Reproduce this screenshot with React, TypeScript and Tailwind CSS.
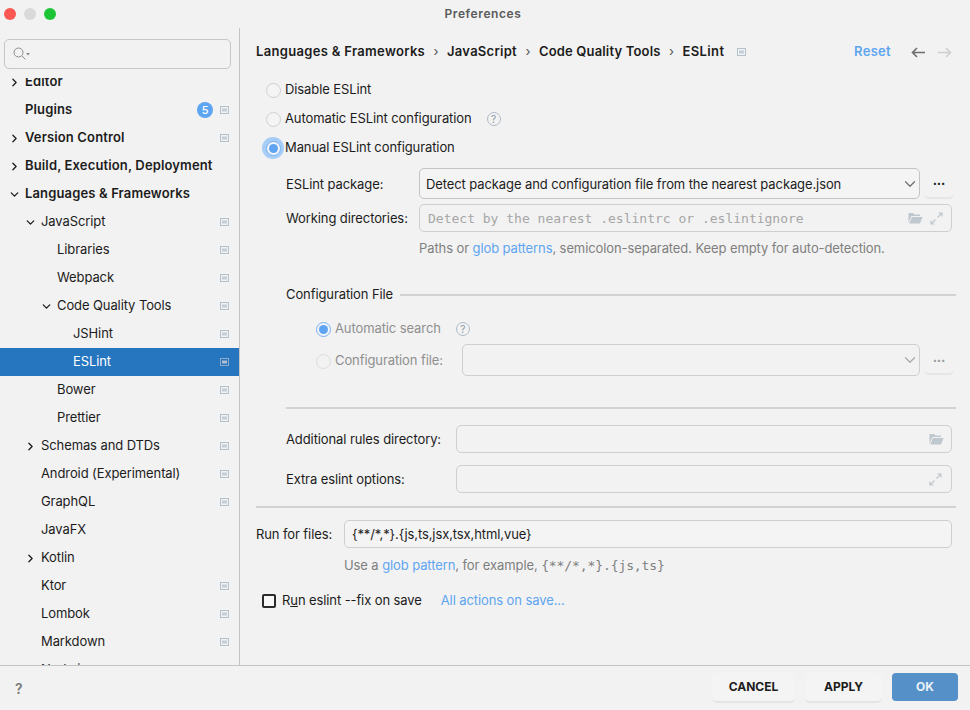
import React from 'react';
import { ChevronDown, ChevronRight } from 'lucide-react';

interface TreeRow {
  label: string;
  depth: number;
  arrow?: 'right' | 'down';
  bold?: boolean;
  pin?: boolean;
  badge?: string;
  selected?: boolean;
}

const rows: TreeRow[] = [
  { label: 'Editor', depth: 0, arrow: 'right', bold: true },
  { label: 'Plugins', depth: 0, bold: true, pin: true, badge: '5' },
  { label: 'Version Control', depth: 0, arrow: 'right', bold: true, pin: true },
  { label: 'Build, Execution, Deployment', depth: 0, arrow: 'right', bold: true },
  { label: 'Languages & Frameworks', depth: 0, arrow: 'down', bold: true },
  { label: 'JavaScript', depth: 1, arrow: 'down', pin: true },
  { label: 'Libraries', depth: 2, pin: true },
  { label: 'Webpack', depth: 2, pin: true },
  { label: 'Code Quality Tools', depth: 2, arrow: 'down', pin: true },
  { label: 'JSHint', depth: 3, pin: true },
  { label: 'ESLint', depth: 3, pin: true, selected: true },
  { label: 'Bower', depth: 2, pin: true },
  { label: 'Prettier', depth: 2, pin: true },
  { label: 'Schemas and DTDs', depth: 1, arrow: 'right', pin: true },
  { label: 'Android (Experimental)', depth: 1, pin: true },
  { label: 'GraphQL', depth: 1, pin: true },
  { label: 'JavaFX', depth: 1 },
  { label: 'Kotlin', depth: 1, arrow: 'right' },
  { label: 'Ktor', depth: 1, pin: true },
  { label: 'Lombok', depth: 1, pin: true },
  { label: 'Markdown', depth: 1, pin: true },
  { label: 'Node.js', depth: 1, pin: true },
];

const depthPadding = ['pl-[25px]', 'pl-[41px]', 'pl-[57px]', 'pl-[73px]'];
const arrowLeft = ['left-[8px]', 'left-[24px]', 'left-[40px]', 'left-[56px]'];

// small "project scope" marker shown next to settings
const PinIcon = ({ light }: { light?: boolean }) => (
  <svg width="9" height="8" viewBox="0 0 9 8" className="block">
    <rect x="0.5" y="0.5" width="8" height="7" fill="none" stroke={light ? '#8fa9c6' : '#b4c0ca'} />
    <rect x="2" y="2.5" width="5" height="3" fill={light ? '#b0c0d0' : '#c3ced8'} />
  </svg>
);

const Radio = ({ checked, focused, disabled }: { checked?: boolean; focused?: boolean; disabled?: boolean }) => (
  <span className="relative flex h-4 w-4 shrink-0 items-center justify-center">
    {focused && <span className="absolute -inset-[3px] rounded-full bg-[#a5cdf7]" />}
    <span
      className={`relative flex h-[15px] w-[15px] items-center justify-center rounded-full border ${
        checked ? 'border-[#76b1f2] bg-[#f2f5fa]' : disabled ? 'border-[#dcdcdc] bg-[#f2f2f2]' : 'border-[#d0d0d0] bg-[#f4f4f4]'
      }`}
    >
      {checked && <span className="h-[9px] w-[9px] rounded-full bg-[#5fa4f0]" />}
    </span>
  </span>
);

const HelpIcon = () => (
  <span className="flex h-[14px] w-[14px] items-center justify-center rounded-full border border-[#aebcc9] text-[10px] leading-none text-[#8a98a6]">
    ?
  </span>
);

const FolderIcon = () => (
  <svg width="15" height="12" viewBox="0 0 15 12" className="block">
    <path d="M0.5 11V1h4.5l1.5 1.5H12V4H3.5L0.5 11Z" fill="#c0c8cf" />
    <path d="M4 5h10.5L12 11.5H1.2L4 5Z" fill="#c0c8cf" />
  </svg>
);

const ExpandIcon = () => (
  <svg width="13" height="13" viewBox="0 0 13 13" className="block" fill="none" stroke="#c0c8cf" strokeWidth="1.2">
    <path d="M7.5 5.5 12 1M8.5 1H12v3.5" />
    <path d="M5.5 7.5 1 12M1 8.5V12h3.5" />
  </svg>
);

const BrowseButton = ({ disabled }: { disabled?: boolean }) => (
  <button
    className={`ml-[4px] flex h-[30px] w-[30px] items-center justify-center rounded-[5px] border-b-2 border-[#e6e6e6] pb-1 text-[13px] font-bold leading-none ${
      disabled ? 'text-[#9a9a9a]' : 'text-[#1c1c1c]'
    }`}
  >
    ...
  </button>
);

const App: React.FC = () => {
  return (
    <div className="flex h-[710px] w-[970px] flex-col overflow-hidden bg-[#f2f2f2] font-['Inter',sans-serif] text-[13px] tracking-[-0.1px] text-[#1c1c1c]">
      {/* Title bar */}
      <div className="relative flex h-[28px] shrink-0 items-center justify-center pr-[4px]">
        <div className="absolute left-[4px] top-[8px] flex gap-[8px]">
          <span className="h-3 w-3 rounded-full bg-[#fc5753]" />
          <span className="h-3 w-3 rounded-full bg-[#d9d9d9]" />
          <span className="h-3 w-3 rounded-full bg-[#1dc536]" />
        </div>
        <span className="text-[12px] font-semibold tracking-[0.6px] text-[#5a5a5a]">Preferences</span>
      </div>

      <div className="flex min-h-0 flex-1">
        {/* Sidebar */}
        <div className="flex w-[240px] shrink-0 flex-col border-r border-[#c4c4c4]">
          <div className="mx-[4px] mt-[11px] flex h-[30px] w-[227px] shrink-0 items-center rounded-[5px] border border-[#c6c6c6] pl-[8px]">
            <svg width="17" height="14" viewBox="0 0 17 14" fill="none" className="block">
              <circle cx="5.5" cy="5.5" r="4.5" stroke="#8c8c8c" />
              <path d="M9 9l3.5 3.5" stroke="#8c8c8c" />
              <path d="M13 6h4l-2 2.5z" fill="#8c8c8c" />
            </svg>
          </div>
          <div className="mt-[9px] min-h-0 flex-1 overflow-hidden">
            <div className="-mt-[10px]">
              {rows.map((row) => (
                <div
                  key={row.label}
                  className={`relative flex h-[28px] items-center pr-[10px] ${depthPadding[row.depth]} ${
                    row.selected ? 'bg-[#2675bf] text-white' : ''
                  }`}
                >
                  {row.arrow === 'right' && (
                    <ChevronRight size={13} strokeWidth={2.4} className={`absolute ${arrowLeft[row.depth]}`} />
                  )}
                  {row.arrow === 'down' && (
                    <ChevronDown size={13} strokeWidth={2.4} className={`absolute ${arrowLeft[row.depth]}`} />
                  )}
                  <span className={`flex-1 whitespace-nowrap ${row.bold ? 'font-semibold tracking-[0.14px]' : ''}`}>{row.label}</span>
                  {row.badge && (
                    <span className="mr-[7px] flex h-4 w-4 items-center justify-center rounded-full bg-[#5ea5f1] text-[11px] font-medium text-white">
                      {row.badge}
                    </span>
                  )}
                  {row.pin && <PinIcon light={row.selected} />}
                </div>
              ))}
            </div>
          </div>
        </div>

        {/* Main panel */}
        <div className="min-w-0 flex-1 pl-[16px]">
          <div className="mt-[10px] flex h-[28px] items-center pr-[18px]">
            <div className="flex items-center font-semibold">
              <span className="tracking-[0.32px]">Languages &amp; Frameworks</span>
              <span className="mx-[8.5px] font-normal text-[#555]">›</span>
              <span className="tracking-[0.28px]">JavaScript</span>
              <span className="mx-[8.5px] font-normal text-[#555]">›</span>
              <span className="tracking-[0.17px]">Code Quality Tools</span>
              <span className="mx-[8.5px] font-normal text-[#555]">›</span>
              <span className="tracking-[0.4px]">ESLint</span>
              <span className="ml-[13px]">
                <PinIcon />
              </span>
            </div>
            <span className="ml-auto font-semibold tracking-[0.3px] text-[#5ea5f1]">Reset</span>
            <svg width="14" height="11" viewBox="0 0 14 11" fill="none" stroke="#6e6e6e" strokeWidth="1.6" className="ml-[20px] block">
              <path d="M14 5.5H1.5M6 1 1.5 5.5 6 10" />
            </svg>
            <svg width="14" height="11" viewBox="0 0 14 11" fill="none" stroke="#cfcfcf" strokeWidth="1.6" className="ml-[13px] block">
              <path d="M0 5.5h12.5M8 1l4.5 4.5L8 10" />
            </svg>
          </div>

          {/* Mode radios */}
          <div className="mt-[16px] flex flex-col gap-[13px] pl-[9px]">
            <label className="flex h-4 items-center gap-[4px]">
              <Radio />
              <span>Disable ESLint</span>
            </label>
            <label className="flex h-4 items-center gap-[4px]">
              <Radio />
              <span>Automatic ESLint configuration</span>
              <span className="ml-[11px]">
                <HelpIcon />
              </span>
            </label>
            <label className="flex h-4 items-center gap-[4px]">
              <Radio checked focused />
              <span>Manual ESLint configuration</span>
            </label>
          </div>

          {/* Package settings */}
          <div className="mt-[12px] pl-[30px]">
            <div className="flex items-center">
              <span className="w-[133px] shrink-0 pt-[2px]">ESLint package:</span>
              <div className="flex h-[31px] w-[501px] items-center justify-between rounded-[5px] border border-[#c4c4c4] bg-[#f4f4f4] pl-[6px]">
                <span className="pt-[2px]">Detect package and configuration file from the nearest package.json</span>
                <ChevronDown size={18} strokeWidth={1.6} className="text-[#6e6e6e]" />
              </div>
              <BrowseButton />
            </div>
            <div className="mt-[5px] flex items-center">
              <span className="w-[133px] shrink-0 pt-[2px]">Working directories:</span>
              <div className="flex h-[28px] w-[533px] items-center justify-between rounded-[5px] border border-[#cfcfcf] pl-[8px] pr-[8px]">
                <span className="pt-[2px] font-['DejaVu_Sans_Mono',monospace] text-[13px] tracking-normal text-[#a6a6a6]">
                  Detect by the nearest .eslintrc or .eslintignore
                </span>
                <span className="flex items-center gap-[7px]">
                  <FolderIcon />
                  <ExpandIcon />
                </span>
              </div>
            </div>
            <p className="ml-[133px] mt-[8px] leading-[16px] text-[#7f7f7f]">
              Paths or <span className="text-[#5ea5f1]">glob patterns</span>, semicolon-separated. Keep empty for auto-detection.
            </p>

            {/* Configuration file */}
            <div className="mt-[31px] flex h-[16px] items-center">
              <span>Configuration File</span>
              <span className="ml-[7px] h-[2px] flex-1 bg-[#d2d2d2]" />
              <span className="w-[14px]" />
            </div>
            <div className="ml-[29px] mt-[18px] flex h-4 items-center">
              <Radio checked disabled />
              <span className="ml-[4px] text-[#8f8f8f]">Automatic search</span>
              <span className="ml-[15px]">
                <HelpIcon />
              </span>
            </div>
            <div className="ml-[29px] mt-[7px] flex items-center">
              <span className="pt-[2px]">
                <Radio disabled />
              </span>
              <span className="ml-[4px] w-[127px] shrink-0 pt-[2px] text-[#8f8f8f]">Configuration file:</span>
              <div className="flex h-[32px] w-[458px] items-center justify-end rounded-[5px] border border-[#cfcfcf]">
                <ChevronDown size={18} strokeWidth={1.6} className="text-[#a8a8a8]" />
              </div>
              <BrowseButton disabled />
            </div>
            <div className="mr-[14px] mt-[31px] h-[2px] bg-[#d2d2d2]" />

            <div className="mt-[16px] flex items-center">
              <span className="w-[170px] shrink-0 pt-[2px]">Additional rules directory:</span>
              <div className="flex h-[28px] w-[496px] items-center justify-end rounded-[5px] border border-[#cfcfcf] pr-[7px]">
                <FolderIcon />
              </div>
            </div>
            <div className="mt-[12px] flex items-center">
              <span className="w-[170px] shrink-0 pt-[2px]">Extra eslint options:</span>
              <div className="flex h-[28px] w-[496px] items-center justify-end rounded-[5px] border border-[#cfcfcf] pr-[9px]">
                <ExpandIcon />
              </div>
            </div>
          </div>

          <div className="mr-[14px] mt-[13px] h-[2px] bg-[#d2d2d2]" />

          <div className="mt-[12px] flex items-center">
            <span className="w-[88px] shrink-0 pt-[2px]">Run for files:</span>
            <div className="flex h-[28px] w-[608px] items-center rounded-[5px] border border-[#cfcfcf] bg-[#f4f4f4] pl-[7px] pt-[2px]">
              {'{**/*,*}.{js,ts,jsx,tsx,html,vue}'}
            </div>
          </div>
          <p className="ml-[88px] mt-[9px] leading-[16px] text-[#7f7f7f]">
            Use a <span className="text-[#5ea5f1]">glob pattern</span>, for example,{' '}
            <span className="font-['DejaVu_Sans_Mono',monospace] text-[13px] tracking-[-0.1px]">{'{**/*,*}.{js,ts}'}</span>
          </p>

          <div className="mt-[19px] flex h-4 items-center pl-[6px]">
            <span className="h-[14px] w-[14px] rounded-[2px] border-2 border-[#2b2b2b] bg-[#f7f7f7]" />
            <span className="ml-[6px]">
              R<span className="underline">u</span>n eslint --fix on save
            </span>
            <span className="ml-[19px] text-[#5ea5f1]">All actions on save...</span>
          </div>
        </div>
      </div>

      {/* Footer */}
      <div className="flex h-[45px] shrink-0 items-center border-t border-[#c4c4c4] pl-[15px] pr-[12px]">
        <span className="text-[14px] font-semibold text-[#7a7a7a]">?</span>
        <div className="ml-auto flex items-center gap-[10px] text-[12px] font-bold tracking-normal">
          <button className="h-[30px] w-[83px] rounded-[5px] border-b-2 border-[#e4e4e4] bg-[#f4f4f4]">CANCEL</button>
          <button className="h-[30px] w-[77px] rounded-[5px] border-b-2 border-[#e4e4e4] bg-[#f4f4f4]">APPLY</button>
          <button className="mb-[2px] h-[28px] w-[66px] rounded-[4px] bg-[#5590c9] text-[#e8f0f8]">OK</button>
        </div>
      </div>
    </div>
  );
};

export default App;
